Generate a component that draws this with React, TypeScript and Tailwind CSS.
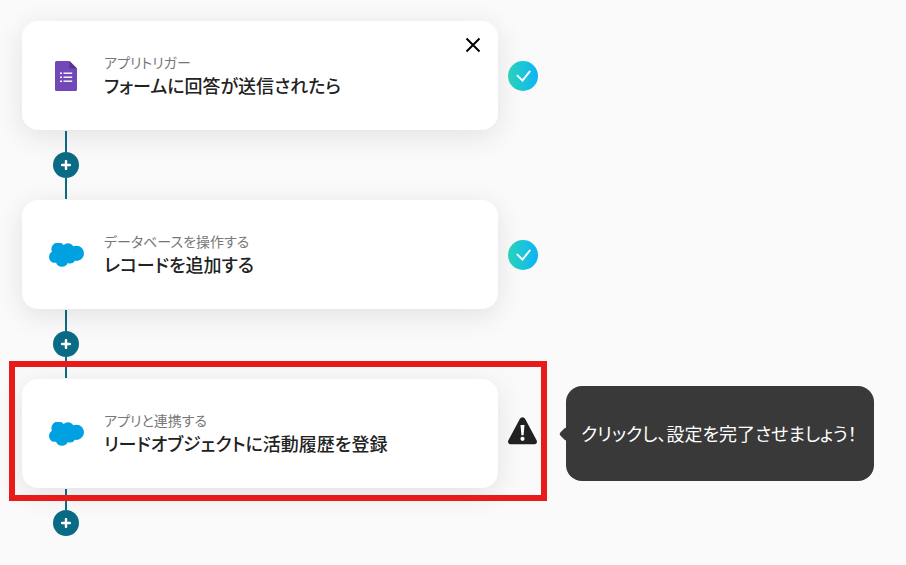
import type { FC, ReactNode } from 'react';

type Status = 'done' | 'warning';

interface Step {
  id: number;
  app: 'forms' | 'salesforce';
  label: string;
  title: string;
  status: Status;
  closable?: boolean;
  hint?: string;
}

const steps: Step[] = [
  {
    id: 1,
    app: 'forms',
    label: 'アプリトリガー',
    title: 'フォームに回答が送信されたら',
    status: 'done',
    closable: true,
  },
  {
    id: 2,
    app: 'salesforce',
    label: 'データベースを操作する',
    title: 'レコードを追加する',
    status: 'done',
  },
  {
    id: 3,
    app: 'salesforce',
    label: 'アプリと連携する',
    title: 'リードオブジェクトに活動履歴を登録',
    status: 'warning',
    hint: 'クリックし、設定を完了させましょう！',
  },
];

const FormsIcon: FC = () => (
  <svg viewBox="0 0 22 30" className="h-[30px] w-[22px]" aria-hidden="true">
    <path d="M1.5 0h13L22 7.5v21a1.5 1.5 0 0 1-1.5 1.5h-19A1.5 1.5 0 0 1 0 28.5v-27A1.5 1.5 0 0 1 1.5 0z" fill="#7248b9" />
    <path d="M14.5 0 22 7.5h-7.5z" fill="#563589" />
    <g fill="#fff">
      <rect x="5" y="11.5" width="2" height="1.6" />
      <rect x="5" y="15.5" width="2" height="1.6" />
      <rect x="5" y="19.5" width="2" height="1.6" />
      <rect x="8.5" y="11.5" width="8.7" height="1.4" />
      <rect x="8.5" y="15.5" width="8.7" height="1.4" />
      <rect x="8.5" y="19.5" width="8.7" height="1.4" />
    </g>
  </svg>
);

const SalesforceIcon: FC = () => (
  <svg viewBox="0 4 24 16.5" className="h-6 w-[35px]" aria-hidden="true">
    <path
      d="M10.006 5.415a4.195 4.195 0 0 1 3.045-1.306c1.56 0 2.954.9 3.69 2.205.63-.3 1.35-.45 2.1-.45 2.85 0 5.159 2.34 5.159 5.22s-2.31 5.22-5.176 5.22c-.345 0-.69-.044-1.02-.104a3.75 3.75 0 0 1-3.3 1.95c-.6 0-1.155-.15-1.65-.375A4.314 4.314 0 0 1 8.88 20.4a4.302 4.302 0 0 1-4.05-2.82c-.27.062-.54.076-.825.076-2.204 0-4.005-1.8-4.005-4.05 0-1.5.811-2.805 2.01-3.51-.255-.57-.39-1.2-.39-1.846 0-2.58 2.1-4.65 4.65-4.65 1.53 0 2.85.705 3.72 1.8z"
      fill="#00a1e0"
    />
  </svg>
);

const StatusIcon: FC<{ status: Status }> = ({ status }) => {
  if (status === 'warning') {
    return (
      <svg viewBox="0.5 3 30 30" className="size-[30px] shrink-0 overflow-visible" aria-hidden="true">
        <path
          d="M12.4 2.8a2.9 2.9 0 0 1 5.2 0l11.6 21.7c.8 1.6-.2 3.7-2.2 3.7H3c-2 0-3-2.1-2.2-3.7z"
          fill="#222"
        />
        <path d="M13 9h4l-.9 10.2h-2.2z" fill="#fff" />
        <circle cx="15" cy="22.8" r="2.1" fill="#fff" />
      </svg>
    );
  }

  return (
    <svg viewBox="0 0 30 30" className="size-[30px] shrink-0" fill="none" aria-hidden="true">
      <defs>
        <linearGradient id="done">
          <stop offset="0" stopColor="#2bd6bd" />
          <stop offset="1" stopColor="#0db3f5" />
        </linearGradient>
      </defs>
      <circle cx="15" cy="15" r="15" fill="url(#done)" />
      <path d="M9.4 14.6l5.1 5 7.3-9.2" stroke="#fff" strokeWidth="1.9" strokeLinecap="round" />
    </svg>
  );
};

const AddButton: FC = () => (
  <button
    type="button"
    aria-label="追加"
    className="flex size-[26px] cursor-pointer items-center justify-center rounded-full bg-[#0b6b85]"
  >
    <svg viewBox="0 0 10 10" className="size-2.5" aria-hidden="true">
      <path d="M5 1v8M1 5h8" stroke="#fff" strokeWidth="2.4" strokeLinecap="round" />
    </svg>
  </button>
);

const Connector: FC<{ last: boolean }> = ({ last }) => (
  <div className="ml-[31px] flex w-[26px] flex-col items-center py-px">
    <div className="h-[21px] w-0.5 bg-[#0b6b85]" />
    <AddButton />
    {!last && <div className="h-[21px] w-0.5 bg-[#0b6b85]" />}
  </div>
);

const Hint: FC<{ children: ReactNode }> = ({ children }) => (
  <div
    role="status"
    className="relative flex-1 rounded-2xl bg-[#393939] px-[15px] py-9 text-lg leading-[23px] whitespace-nowrap text-white"
  >
    <div className="absolute top-1/2 -left-[5px] size-2.5 -translate-y-1/2 rotate-45 rounded-xs bg-[#393939]" />
    <p className="relative">{children}</p>
  </div>
);

const StepRow: FC<{ step: Step }> = ({ step }) => (
  <div className="flex items-center gap-7">
    <div className="relative flex w-full max-w-[516px] items-center gap-2.5">
      <div className="relative flex flex-1 items-center gap-4 rounded-2xl bg-white px-[22px] py-[31px] shadow-[0_6px_28px_rgba(0,0,0,0.1)]">
        <div className="flex w-11 shrink-0 justify-center">
          {step.app === 'forms' ? <FormsIcon /> : <SalesforceIcon />}
        </div>
        <div>
          <p className="text-sm leading-5 text-[#777]">{step.label}</p>
          <h2 className="text-lg leading-[27px] font-medium text-[#222]">{step.title}</h2>
        </div>
        {step.closable && (
          <button type="button" aria-label="閉じる" className="absolute top-[15px] right-4 cursor-pointer p-px">
            <svg viewBox="0 0 16 16" className="size-4" aria-hidden="true">
              <path d="M1.5 1.5l13 13M14.5 1.5l-13 13" stroke="#000" strokeWidth="2" />
            </svg>
          </button>
        )}
      </div>
      <StatusIcon status={step.status} />
      {step.hint && (
        <div className="pointer-events-none absolute -top-[18px] -right-[9px] -bottom-[13px] -left-[13px] z-10 border-6 border-[#e81a1a]" />
      )}
    </div>
    {step.hint && <Hint>{step.hint}</Hint>}
  </div>
);

export default function App() {
  return (
    <main
      lang="ja"
      className="min-h-screen bg-[#fafafa] pt-[21px] pr-8 pb-6 pl-[22px] font-['Noto_Sans_CJK_JP',sans-serif] [font-feature-settings:'palt']"
    >
      {steps.map((step, i) => (
        <section key={step.id}>
          <StepRow step={step} />
          <Connector last={i === steps.length - 1} />
        </section>
      ))}
    </main>
  );
}
